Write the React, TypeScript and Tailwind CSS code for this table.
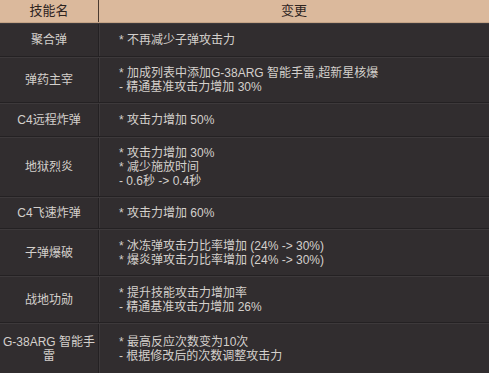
const rows: { name: React.ReactNode; lines: string[]; h: string }[] = [
  { name: "聚合弹", lines: ["* 不再减少子弹攻击力"], h: "h-[34px]" },
  {
    name: "弹药主宰",
    lines: ["* 加成列表中添加G-38ARG 智能手雷,超新星核爆", "- 精通基准攻击力增加 30%"],
    h: "h-[46px]",
  },
  { name: "C4远程炸弹", lines: ["* 攻击力增加 50%"], h: "h-[34px]" },
  {
    name: "地狱烈炎",
    lines: ["* 攻击力增加 30%", "* 减少施放时间", "- 0.6秒 -> 0.4秒"],
    h: "h-[60px]",
  },
  { name: "C4飞速炸弹", lines: ["* 攻击力增加 60%"], h: "h-[32px]" },
  {
    name: "子弹爆破",
    lines: ["* 冰冻弹攻击力比率增加 (24% -> 30%)", "* 爆炎弹攻击力比率增加 (24% -> 30%)"],
    h: "h-[47px]",
  },
  {
    name: "战地功勋",
    lines: ["* 提升技能攻击力增加率", "- 精通基准攻击力增加 26%"],
    h: "h-[47px]",
  },
  {
    name: (
      <>
        G-38ARG 智能手
        <br />雷
      </>
    ),
    lines: ["* 最高反应次数变为10次", "- 根据修改后的次数调整攻击力"],
    h: "h-[52px]",
  },
];

export default function App() {
  return (
    <div
      className="w-[489px] h-[373px] overflow-hidden bg-[#312d2f] text-[12px] leading-[14px] text-[#d4d0cc]"
      style={{ fontFamily: '"Liberation Sans", "Noto Sans CJK SC", sans-serif' }}
    >
      {/* Header */}
      <div className="flex h-[23px] bg-[#dbb99c] border-b border-[#c4a386] text-[13px] text-[#2e241f]">
        <div className="w-[99px] flex items-center justify-center border-r border-[#4a3a30]">技能名</div>
        <div className="flex-1 flex items-center justify-center">变更</div>
      </div>

      {rows.map((r, i) => (
        <div
          key={i}
          className={`flex ${r.h} border-t border-[#3d393b] border-b border-b-[#242123]`}
        >
          <div className="w-[99px] shrink-0 flex items-center justify-center text-center border-r border-[#242123]">
            <span>{r.name}</span>
          </div>
          <div className="flex-1 flex flex-col justify-center pl-[19px] border-l border-[#3d393b]">
            {r.lines.map((l, j) => (
              <div key={j} className="whitespace-pre">
                {l}
              </div>
            ))}
          </div>
        </div>
      ))}
    </div>
  );
}
